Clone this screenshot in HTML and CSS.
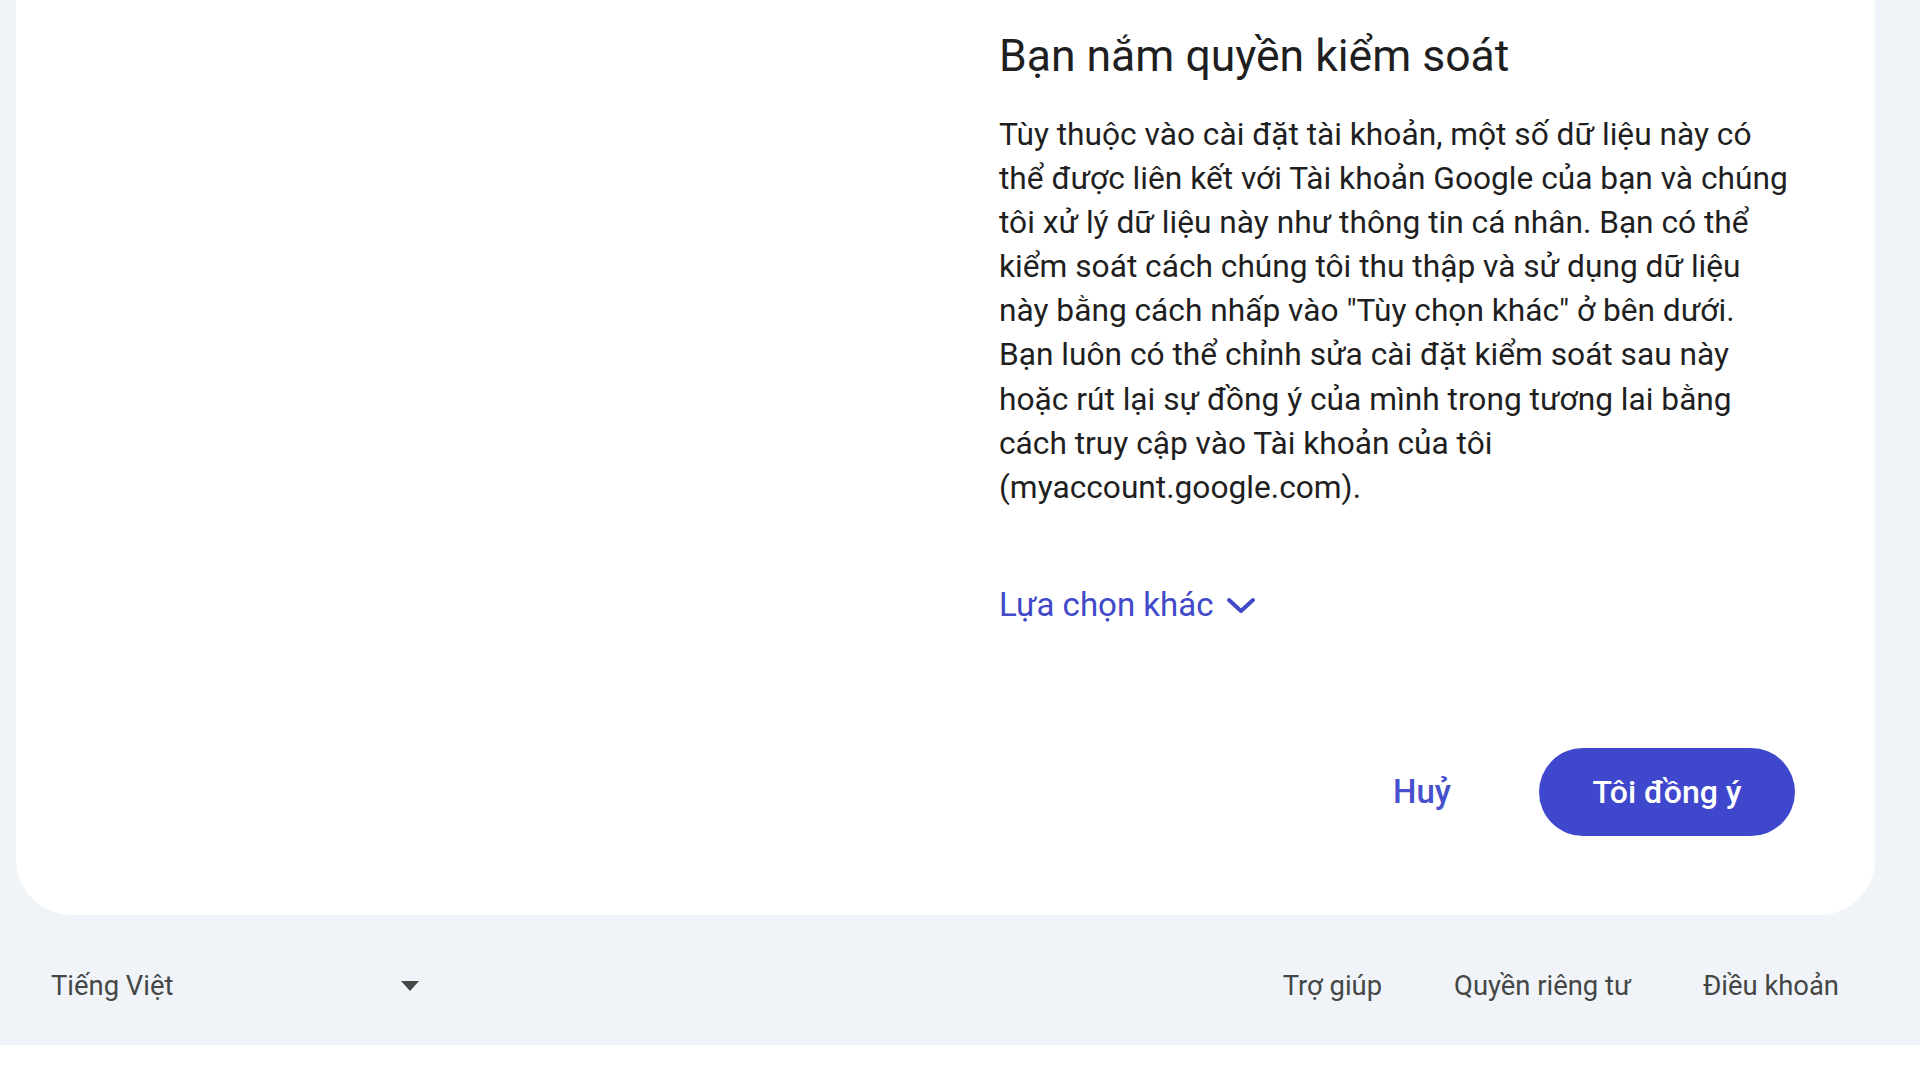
FILE: index.html
```html
<!DOCTYPE html>
<html lang="vi">
<head>
<meta charset="utf-8">
<title>Bạn nắm quyền kiểm soát</title>
<link rel="stylesheet" href="styles.css">
</head>
<body>
<div class="page">
  <main class="card">
    <div class="card-left"></div>
    <div class="card-right">
      <h1 class="title">Bạn nắm quyền kiểm soát</h1>
      <p class="body">Tùy thuộc vào cài đặt tài khoản, một số dữ liệu này có<br>thể được liên kết với Tài khoản Google của bạn và chúng<br>tôi xử lý dữ liệu này như thông tin cá nhân. Bạn có thể<br>kiểm soát cách chúng tôi thu thập và sử dụng dữ liệu<br>này bằng cách nhấp vào "Tùy chọn khác" ở bên dưới.<br>Bạn luôn có thể chỉnh sửa cài đặt kiểm soát sau này<br>hoặc rút lại sự đồng ý của mình trong tương lai bằng<br>cách truy cập vào Tài khoản của tôi<br>(myaccount.google.com).</p>
      <button class="more" type="button">Lựa chọn khác
        <svg class="chev" width="32" height="20" viewBox="0 0 32 20" aria-hidden="true"><path d="M4 5 L16 16 L28 5" fill="none" stroke="currentColor" stroke-width="4" stroke-linecap="round" stroke-linejoin="round"/></svg>
      </button>
      <div class="actions">
        <button class="btn-text" type="button">Huỷ</button>
        <button class="btn-primary" type="button">Tôi đồng ý</button>
      </div>
    </div>
  </main>
  <footer class="footer">
    <div class="lang">
      <span class="lang-label">Tiếng Việt</span>
      <svg class="caret" width="20" height="12" viewBox="0 0 20 12" aria-hidden="true"><path d="M1 1 L19 1 L10 11 Z" fill="currentColor"/></svg>
    </div>
    <nav class="links">
      <a class="link">Trợ giúp</a>
      <a class="link">Quyền riêng tư</a>
      <a class="link">Điều khoản</a>
    </nav>
  </footer>
</div>
</body>
</html>
```

FILE: styles.css
```css
html, body {
  margin: 0;
  padding: 0;
  background: #ffffff;
}
body {
  font-family: Roboto, "Noto Sans", Arial, sans-serif;
  color: #1f1f1f;
}
.page {
  background: #f0f4f9;
  height: 1045px;
  padding: 0 45px 0 16px;
  box-sizing: border-box;
  display: flex;
  flex-direction: column;
}
.card {
  background: #ffffff;
  border-radius: 0 0 56px 56px;
  height: 915px;
  box-sizing: border-box;
  display: grid;
  grid-template-columns: 1fr 796px;
  padding: 0 80px 0 0;
}
.card-right {
  display: flex;
  flex-direction: column;
  padding-top: 32px;
}
.title {
  margin: 0;
  font-size: 44.5px;
  line-height: 48px;
  font-weight: 400;
  color: #1f1f1f;
}
.body {
  margin: 33px 0 0;
  font-size: 31.7px;
  line-height: 44.1px;
  color: #1f1f1f;
  white-space: nowrap;
}
.more {
  margin-top: 73px;
  align-self: flex-start;
  display: flex;
  align-items: center;
  gap: 12px;
  background: none;
  border: 0;
  padding: 0;
  font-family: inherit;
  font-size: 33px;
  line-height: 44px;
  color: #4149c9;
}
.chev {
  display: block;
}
.actions {
  margin-top: 121px;
  display: flex;
  justify-content: flex-end;
  align-items: center;
  gap: 88px;
}
.btn-text {
  background: none;
  border: 0;
  padding: 0;
  font-family: inherit;
  font-size: 33px;
  font-weight: 500;
  color: #4650cc;
}
.btn-primary {
  width: 256px;
  height: 88px;
  border: 0;
  border-radius: 44px;
  background: #3f48cc;
  color: #ffffff;
  font-family: inherit;
  font-size: 32px;
  font-weight: 500;
}
.footer {
  height: 130px;
  box-sizing: border-box;
  display: flex;
  align-items: center;
  justify-content: space-between;
  padding: 12px 36px 0 35px;
  font-size: 27.4px;
  color: #444746;
}
.lang {
  display: flex;
  align-items: center;
  width: 369px;
  justify-content: space-between;
}
.caret {
  color: #444746;
}
.links {
  display: flex;
  gap: 72px;
}
.link {
  color: #444746;
}
```
